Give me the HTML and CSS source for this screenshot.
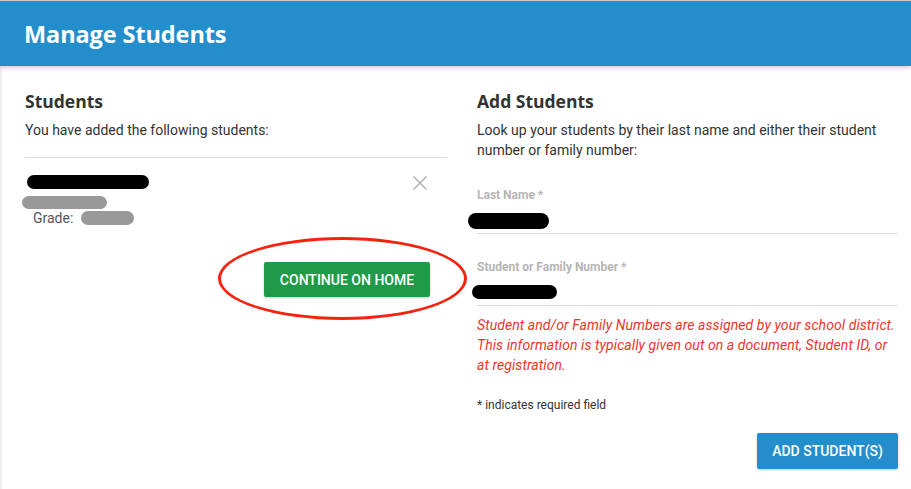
FILE: index.html
```html
<!DOCTYPE html>
<html lang="en">
<head>
    <meta charset="UTF-8">
    <meta name="viewport" content="width=device-width, initial-scale=1.0">
    <title>Manage Students</title>
    <link rel="stylesheet" href="styles.css">
</head>
<body>

<header class="topbar">
    <h1>Manage Students</h1>
</header>

<main class="page">
    <section class="col">
        <h2>Students</h2>
        <p class="intro">You have added the following students:</p>
        <hr class="divider">

        <div class="student">
            <div class="student-info">
                <span class="redact redact-name"></span>
                <span class="redact redact-gray redact-sub"></span>
                <div class="grade">Grade: <span class="redact redact-gray redact-grade"></span></div>
            </div>
            <button class="remove" aria-label="Remove student">
                <svg width="16" height="16" viewBox="0 0 16 16"><path d="M1.5 1.5 L14.5 14.5 M14.5 1.5 L1.5 14.5" stroke="#b3b3b3" stroke-width="1.6" fill="none"/></svg>
            </button>
        </div>

        <div class="continue-row">
            <div class="continue-wrap">
                <span class="circled"></span>
                <button class="btn btn-green">Continue on Home</button>
            </div>
        </div>
    </section>

    <section class="col">
        <h2>Add Students</h2>
        <p class="intro">Look up your students by their last name and either their student number or family number:</p>

        <div class="field">
            <label>Last Name *</label>
            <div class="input"><span class="redact redact-last"></span></div>
        </div>

        <div class="field field-second">
            <label>Student or Family Number *</label>
            <div class="input"><span class="redact redact-num"></span></div>
        </div>

        <p class="hint">Student and/or Family Numbers are assigned by your school district. This information is typically given out on a document, Student ID, or at registration.</p>

        <p class="required">* indicates required field</p>

        <div class="actions">
            <button class="btn btn-blue">Add Student(s)</button>
        </div>
    </section>
</main>

</body>
</html>
```

FILE: styles.css
```css
body {
    margin: 0;
    font-family: Roboto, "Liberation Sans", Arial, sans-serif;
    color: #333;
    background: #fff;
    overflow: hidden;
}
.topbar {
    height: 65px;
    border-top: 1px solid #c9c9c9;
    background-color: #248ecd;
    box-shadow: 0 2px 4px rgba(0, 0, 0, 0.18);
    display: flex;
    align-items: center;
    padding-left: 24px;
    position: relative;
    z-index: 1;
}
.topbar h1 {
    margin: 0;
    color: #fff;
    font-family: "Open Sans", Lato, sans-serif;
    font-weight: 700;
    font-size: 23.5px;
    letter-spacing: -0.1px;
}
.page {
    display: grid;
    grid-template-columns: 422px 421px;
    column-gap: 30px;
    padding: 24px 13px 0 25px;
    height: 399px;
    box-shadow: inset 3px 0 3px -2px rgba(0, 0, 0, 0.12);
}
h2 {
    margin: 0 0 8px;
    font-family: "Open Sans", Lato, sans-serif;
    font-size: 17.5px;
    line-height: 22px;
    font-weight: 700;
    color: #333;
}
.intro {
    margin: 0;
    font-size: 14px;
    line-height: 20px;
}
.divider {
    border: none;
    border-top: 1px solid #dcdcdc;
    margin: 17px 0 0;
}
.redact {
    display: inline-block;
    background: #000;
    border-radius: 8px;
}
.redact-gray {
    background: #999;
}
.student {
    display: flex;
    justify-content: space-between;
    align-items: flex-start;
    padding-top: 17px;
}
.student-info {
    display: flex;
    flex-direction: column;
    align-items: flex-start;
}
.redact-name {
    width: 122px;
    height: 14px;
    margin-left: 2px;
}
.redact-sub {
    width: 85px;
    height: 13px;
    margin: 7px 0 0 -3px;
}
.grade {
    display: flex;
    align-items: center;
    margin: 1px 0 0 8px;
    font-size: 14px;
    color: #555;
}
.redact-grade {
    width: 53px;
    height: 14px;
    margin-left: 8px;
}
.remove {
    border: none;
    background: none;
    padding: 0;
    margin: 0 19px 0 0;
    line-height: 0;
    cursor: pointer;
}
.continue-row {
    display: flex;
    justify-content: flex-end;
    padding: 36px 17px 0 0;
}
.continue-wrap {
    position: relative;
}
.circled {
    position: absolute;
    left: -46px;
    top: -25px;
    width: 243px;
    height: 77px;
    border: 3px solid #f5220d;
    border-radius: 50%;
    pointer-events: none;
}
.btn {
    border: none;
    border-radius: 2px;
    color: #fff;
    font-family: Roboto, sans-serif;
    font-weight: 500;
    font-size: 14px;
    text-transform: uppercase;
    box-shadow: 0 1px 3px rgba(0, 0, 0, 0.2);
    cursor: pointer;
}
.btn-green {
    background-color: #1e9a48;
    width: 166px;
    height: 35px;
}
.btn-blue {
    background-color: #248ecd;
    width: 141px;
    height: 36px;
}
.field {
    margin-top: 27px;
}
.field-second {
    margin-top: 25px;
}
.field label {
    display: block;
    font-size: 12px;
    line-height: 16px;
    font-weight: 700;
    color: #b5b5b5;
}
.input {
    height: 30px;
    border-bottom: 1px solid #dcdcdc;
    display: flex;
    align-items: flex-end;
}
.redact-last {
    width: 81px;
    height: 16px;
    margin: 0 0 4px -9px;
}
.redact-num {
    width: 85px;
    height: 14px;
    margin: 0 0 6px -5px;
}
.hint {
    margin: 9px 0 0;
    font-size: 14px;
    line-height: 20px;
    font-style: italic;
    letter-spacing: 0.07px;
    color: #f0352b;
}
.required {
    margin: 22px 0 0;
    font-size: 12px;
    line-height: 16px;
}
.actions {
    display: flex;
    justify-content: flex-end;
    margin-top: 20px;
}
```
